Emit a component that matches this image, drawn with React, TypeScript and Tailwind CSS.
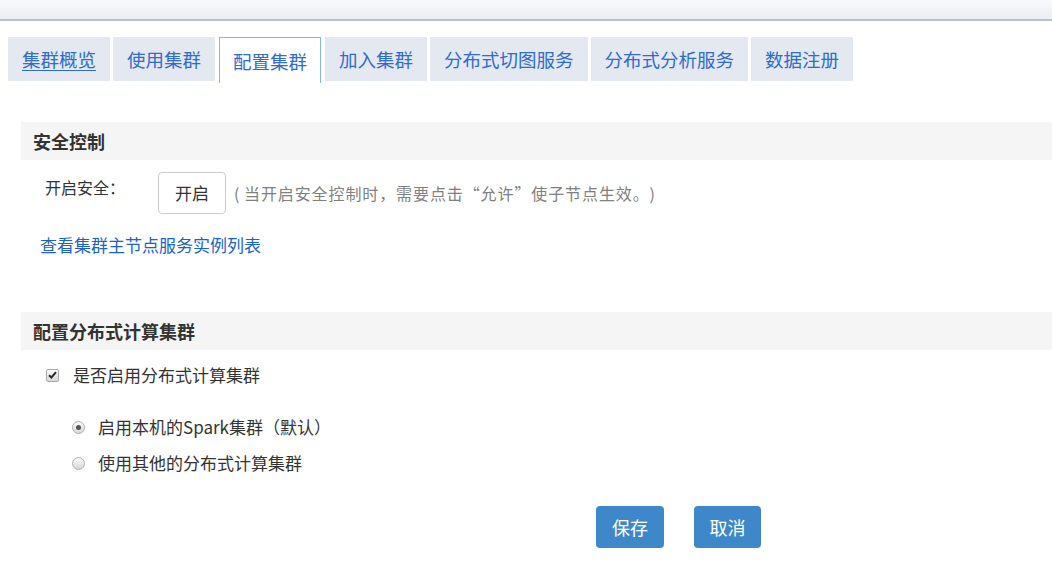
import { FunctionComponent } from "react";

const tabs = [
  "集群概览",
  "使用集群",
  "配置集群",
  "加入集群",
  "分布式切图服务",
  "分布式分析服务",
  "数据注册",
];

const CheckBox: FunctionComponent<{ checked?: boolean }> = ({ checked }) => (
  <span className="w-[13px] h-[13px] shrink-0 rounded-[2px] border border-[#a9a9a9] bg-gradient-to-b from-[#fcfcfc] to-[#d8d8d8] flex items-center justify-center">
    {checked && (
      <svg width="9" height="8" viewBox="0 0 9 8">
        <path
          d="M1 4.2 L3.4 6.5 L8 1.2"
          fill="none"
          stroke="#2b2b2b"
          strokeWidth="2"
        />
      </svg>
    )}
  </span>
);

const Radio: FunctionComponent<{ checked?: boolean }> = ({ checked }) => (
  <span className="w-[13px] h-[13px] shrink-0 rounded-full border border-[#b0b0b0] bg-gradient-to-b from-[#fafafa] to-[#d8d8d8] flex items-center justify-center">
    {checked && <span className="w-[5px] h-[5px] rounded-full bg-[#555]" />}
  </span>
);

const App: FunctionComponent = () => {
  return (
    <div
      lang="zh-CN"
      className="w-[1052px] h-[568px] bg-white overflow-hidden flex flex-col text-[#333]"
      style={{ fontFamily: '"Noto Sans CJK SC", "Noto Sans", sans-serif' }}
    >
      <div className="h-[21px] shrink-0 bg-gradient-to-b from-[#f8f9fa] to-[#eceef2] border-b-2 border-[#b9c0cc]" />

      <div className="mt-[16px] ml-[8px] h-[44px] flex flex-row items-start gap-[3px]">
        {tabs.map((t, i) =>
          i === 2 ? (
            <div
              key={t}
              className="h-[46px] ml-[1px] mr-[1px] px-[13px] bg-white border-t border-x border-[#86b6e5] flex items-center text-[18.5px] leading-[24px] text-[#2f6ccb] whitespace-nowrap"
            >
              {t}
            </div>
          ) : (
            <div
              key={t}
              className={`h-[44px] px-[14px] bg-[#e4e8f0] flex items-center text-[18.5px] leading-[24px] text-[#2f6ccb] whitespace-nowrap ${
                i === 0 ? "underline underline-offset-[3px]" : ""
              }`}
            >
              {t}
            </div>
          )
        )}
      </div>

      <div className="ml-[21px] mt-[41px] flex flex-col">
        <div className="h-[38px] bg-[#f5f5f5] pl-[12px] flex items-center text-[18px] font-bold leading-[24px] text-[#333]">
          安全控制
        </div>

        <div className="mt-[12px] flex flex-row items-start">
          <div className="w-[137px] pl-[24px] pt-[3px] text-[16px] leading-[24px] text-[#333]">
            开启安全：
          </div>
          <button className="w-[68px] h-[42px] border border-[#cccccc] rounded-[4px] bg-white text-[17px] text-[#333] flex items-center justify-center">
            开启
          </button>
          <div className="ml-[8px] flex flex-row text-[16px] leading-[42px] text-[#808080] tracking-[0.9px] [font-feature-settings:'fwid']">
            <span className="w-[10px] [font-feature-settings:normal]">(</span>
            <span>当开启安全控制时，需要点击“允许”使子节点生效。</span>
            <span className="[font-feature-settings:normal]">)</span>
          </div>
        </div>

        <div className="mt-[19px] ml-[19px] text-[17px] leading-[24px] text-[#1c63c7]">
          查看集群主节点服务实例列表
        </div>

        <div className="mt-[55px] h-[38px] bg-[#f5f5f5] pl-[12px] flex items-center text-[18px] font-bold leading-[24px] text-[#333]">
          配置分布式计算集群
        </div>

        <div className="mt-[13px] ml-[25px] flex flex-row items-center gap-[14px] h-[24px]">
          <CheckBox checked />
          <span className="text-[17px] leading-[24px]">是否启用分布式计算集群</span>
        </div>

        <div className="mt-[28px] ml-[51px] flex flex-row items-center gap-[13px] h-[24px]">
          <Radio checked />
          <span className="text-[17px] leading-[24px]">启用本机的Spark集群（默认）</span>
        </div>

        <div className="mt-[12px] ml-[51px] flex flex-row items-center gap-[13px] h-[24px]">
          <Radio />
          <span className="text-[17px] leading-[24px]">使用其他的分布式计算集群</span>
        </div>

        <div className="mt-[31px] ml-[575px] flex flex-row gap-[30px]">
          <button className="w-[68px] h-[42px] rounded-[4px] bg-[#3e88c9] text-white text-[18px] flex items-center justify-center">
            保存
          </button>
          <button className="w-[67px] h-[42px] rounded-[4px] bg-[#3e88c9] text-white text-[18px] flex items-center justify-center">
            取消
          </button>
        </div>
      </div>
    </div>
  );
};

export default App;
